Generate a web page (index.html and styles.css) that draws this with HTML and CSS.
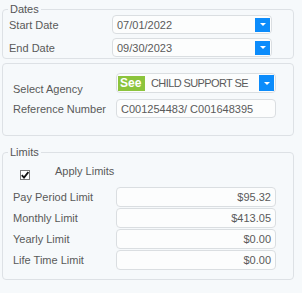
FILE: index.html
```html
<html lang="en">
<head>
    <meta charset="UTF-8">
    <title>Limits</title>
    <link rel="stylesheet" href="styles.css">
</head>
<body>
    <div class="panel">
        <fieldset class="group dates">
            <legend>Dates</legend>
            <div class="row">
                <label>Start Date</label>
                <div class="field combo"><span class="value">07/01/2022</span><span class="drop"></span></div>
            </div>
            <div class="row">
                <label>End Date</label>
                <div class="field combo"><span class="value">09/30/2023</span><span class="drop"></span></div>
            </div>
        </fieldset>

        <fieldset class="group agency">
            <div class="row agency-row">
                <label>Select Agency</label>
                <div class="field combo agency-field">
                    <span class="badge">See</span>
                    <span class="value clip">CHILD SUPPORT SE</span>
                    <span class="drop"></span>
                </div>
            </div>
            <div class="row">
                <label>Reference Number</label>
                <div class="field"><span class="value">C001254483/ C001648395</span></div>
            </div>
        </fieldset>

        <fieldset class="group limits">
            <legend>Limits</legend>
            <div class="check-row">
                <span class="checkbox">
                    <svg width="8" height="8" viewBox="0 0 8 8"><path d="M0.8 4.2 L3 6.6 L7.4 1" fill="none" stroke="#111" stroke-width="1.8"/></svg>
                </span>
                <span>Apply Limits</span>
            </div>
            <div class="row tight">
                <label>Pay Period Limit</label>
                <div class="field money"><span class="value">$95.32</span></div>
            </div>
            <div class="row tight">
                <label>Monthly Limit</label>
                <div class="field money"><span class="value">$413.05</span></div>
            </div>
            <div class="row tight">
                <label>Yearly Limit</label>
                <div class="field money"><span class="value">$0.00</span></div>
            </div>
            <div class="row tight">
                <label>Life Time Limit</label>
                <div class="field money"><span class="value">$0.00</span></div>
            </div>
        </fieldset>
    </div>
</body>
</html>
```

FILE: styles.css
```css
* {
    box-sizing: border-box;
}
body {
    margin: 0;
    background: #f6f9fb;
    font-family: "Liberation Sans", Arial, sans-serif;
    font-size: 11px;
    color: #595959;
}
.panel {
    width: 292px;
    margin-left: 2px;
}
.group {
    margin: 0;
    border: 1px solid #dde1e5;
    border-radius: 4px;
    padding: 0 0 0 10px;
    min-width: 0;
}
.group legend {
    padding: 0 2px;
    margin-left: -5px;
    line-height: 12px;
    color: #555;
}
.dates {
    margin-top: 3px;
    padding-left: 6px;
    padding-bottom: 1px;
}
.dates legend {
    margin-left: -1px;
}
.dates label {
    width: 107px;
}
.agency {
    margin-top: 4px;
    padding-top: 9px;
    padding-bottom: 17px;
}
.limits {
    margin-top: 10px;
    padding-bottom: 9px;
}
.row {
    display: flex;
    align-items: center;
    height: 19px;
    margin-bottom: 4px;
}
.row:last-child {
    margin-bottom: 0;
}
.row label {
    width: 103px;
    flex-shrink: 0;
}
.agency-row {
    height: 20px;
    margin-bottom: 6px;
}
.agency-row label {
    margin-top: 11px;
}
.tight {
    height: 20px;
    margin-bottom: 1px;
}
.field {
    width: 160px;
    height: 100%;
    display: flex;
    align-items: center;
    padding: 0 4px;
    border: 1px solid #dadee1;
    border-radius: 4px;
    background: #fcfdfd;
    color: #5a5a5a;
    white-space: nowrap;
    overflow: hidden;
}
.combo {
    padding-right: 1px;
}
.value.clip {
    flex: 1;
    letter-spacing: -0.6px;
}
.drop {
    margin-left: auto;
    width: 15px;
    height: 14px;
    flex-shrink: 0;
    background: #0c8cfb;
    display: flex;
    align-items: center;
    justify-content: center;
}
.drop::after {
    content: "";
    border-left: 3px solid transparent;
    border-right: 3px solid transparent;
    border-top: 3px solid #fff;
}
.agency-field {
    padding-left: 1px;
}
.agency-field .drop {
    height: 16px;
    margin-left: 1px;
}
.badge {
    width: 27px;
    height: 15px;
    flex-shrink: 0;
    background: #8cc43c;
    color: #fff;
    font-weight: bold;
    font-size: 12px;
    line-height: 15px;
    padding-left: 2px;
    margin-right: 6px;
}
.money {
    justify-content: flex-end;
}
.check-row {
    display: flex;
    align-items: center;
    height: 12px;
    margin-top: 9px;
    margin-bottom: 8px;
    padding-left: 7px;
}
.check-row span:last-child {
    margin-left: 25px;
    margin-top: -5px;
}
.checkbox {
    width: 10px;
    height: 10px;
    border: 1px solid #7a7a7a;
    background: #fff;
    display: flex;
    align-items: center;
    justify-content: center;
    margin-top: 3px;
}
```
